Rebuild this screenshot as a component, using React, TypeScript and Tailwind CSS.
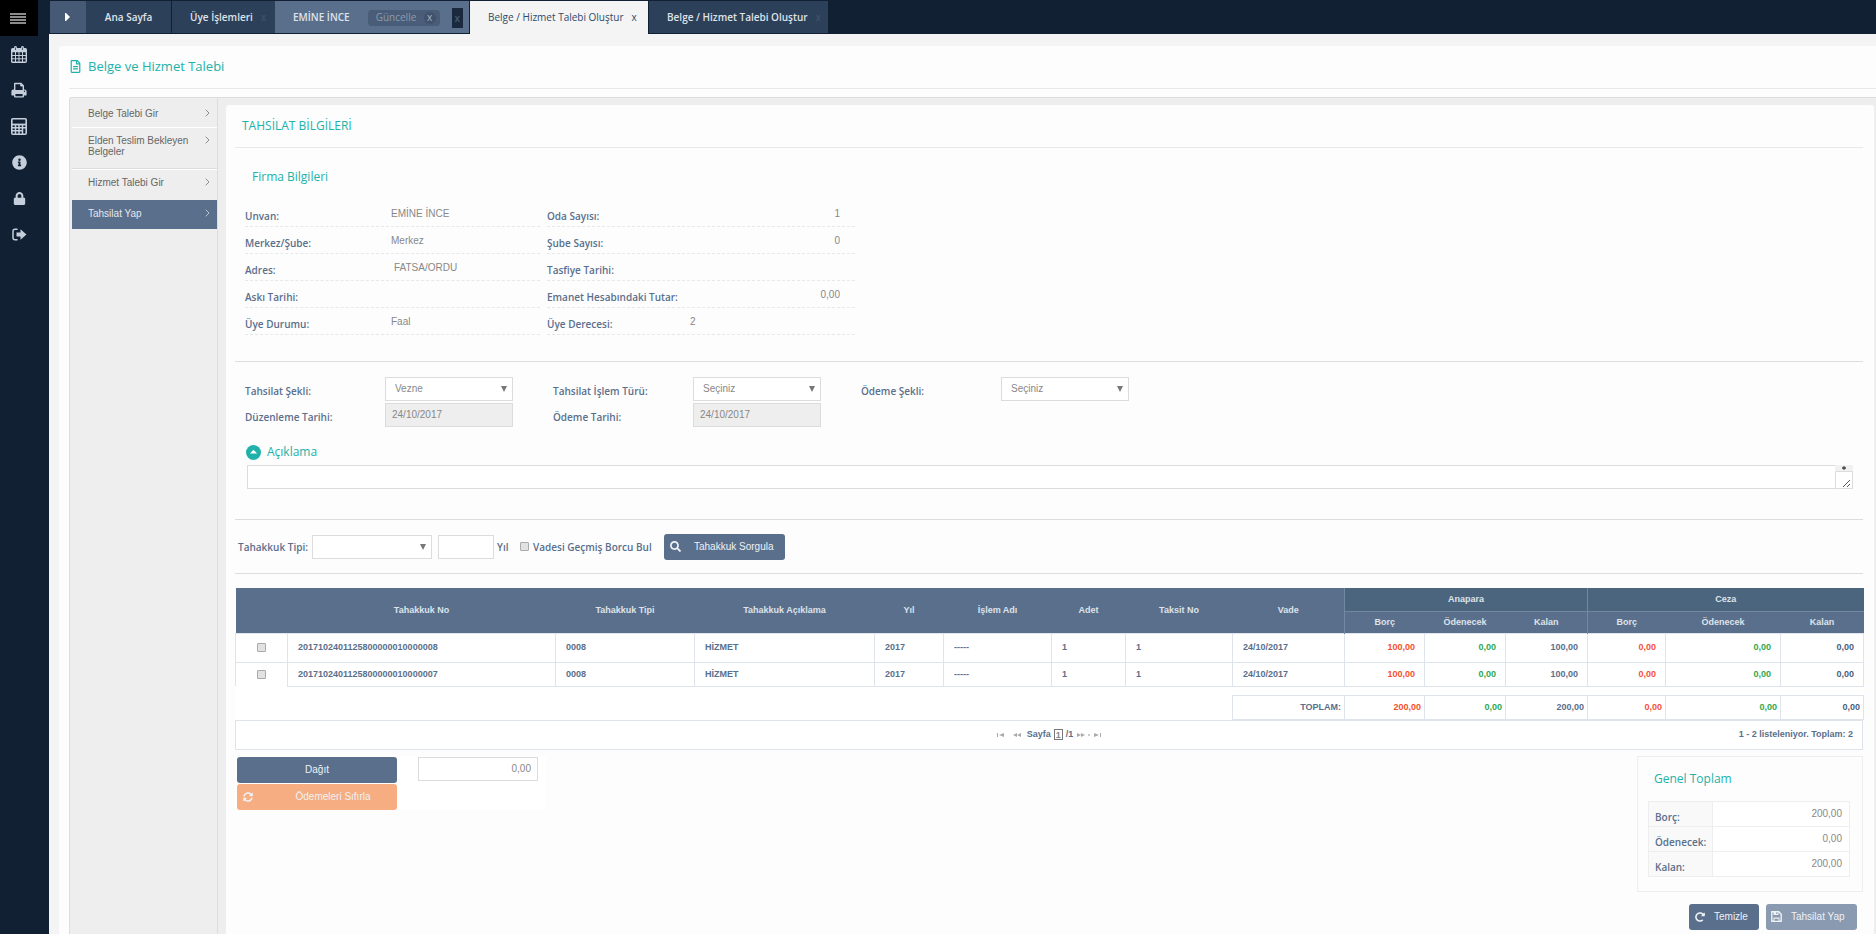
import { useState } from "react"
import type { ReactNode } from "react"
import { FaInfoCircle, FaLock, FaRedoAlt, FaRegFileAlt, FaSearch, FaSyncAlt } from "react-icons/fa"

const LABEL = "font-['Open_Sans',sans-serif] text-[10px] leading-4 font-semibold text-[#5a6f8c]"
const HEADING = "font-['Open_Sans',sans-serif] text-[12px] leading-4 text-[#20b2aa]"
const FIELD = "h-6 border border-[#dcdcdc] font-['Liberation_Sans',sans-serif] text-[10px] text-[#888]"

function CalendarIcon() {
  return (
    <svg width="16" height="17" viewBox="0 0 16 17" fill="none" stroke="currentColor">
      <rect x="0.700" y="2.700" width="14.600" height="13.600" rx="1" strokeWidth="1.400" />
      <path d="M1 4.500h14" strokeWidth="3.500" />
      <path d="M4.500 6v10M8 6v10M11.500 6v10M1 9.500h14M1 12.800h14" strokeWidth="1" />
      <path d="M4.500 1.500v2.500M11.500 1.500v2.500" strokeWidth="2.800" strokeLinecap="round" />
      <path d="M4.500 1.500v2.500M11.500 1.500v2.500" stroke="#122033" strokeWidth="0.700" />
    </svg>
  )
}

function PrintIcon() {
  return (
    <svg width="16" height="16" viewBox="0 0 16 16" fill="currentColor">
      <path
        fillRule="evenodd"
        d="M3 1.500Q3 .8 3.700.8h6.600L13 3.500v3.900h.7Q15.600 7.400 15.600 9.300v3.700q0 .4-.4.4H13v1.200q0 .8-.8.8H3.800q-.8 0-.8-.8v-1.200H.8q-.4 0-.4-.4V9.300Q.4 7.400 2.300 7.400H3zM4.400 2.200V8h7.200V4.600H10Q9.200 4.600 9.200 3.800V2.200zM4.400 11.900v2.300h7.200v-2.300zM13.500 8.600a.7.7 0 1 0 0 1.400a.7.7 0 1 0 0-1.400z"
      />
    </svg>
  )
}

function CalculatorIcon() {
  return (
    <svg width="16" height="17" viewBox="0 0 16 17" fill="none" stroke="currentColor">
      <rect x="0.800" y="0.800" width="14.400" height="15.400" rx="1" strokeWidth="1.600" />
      <path d="M1 6.500h14" strokeWidth="1.800" />
      <path d="M4.500 7v9M8 7v9M11.500 7v9M1 9.700h14M1 12.800h10.500" strokeWidth="1.500" />
    </svg>
  )
}

function SignOutIcon() {
  return (
    <svg width="15" height="13" viewBox="0 0 15 13">
      <path d="M5.500 1.200H3Q1 1.200 1 3.200v6.600q0 2 2 2h2.500" fill="none" stroke="currentColor" strokeWidth="1.500" />
      <path d="M4.500 4.500h4V1.200L14.500 6.500l-6 5.300V8.500h-4z" fill="currentColor" />
    </svg>
  )
}

function SaveIcon() {
  return (
    <svg width="11" height="11" viewBox="0 0 11 11" className="shrink-0">
      <path d="M.8.800h7L10.200 3.200v7H.8z" fill="none" stroke="currentColor" strokeWidth="1.400" />
      <path d="M2.500.5h5v3.500h-5zM2.500 6.500h6v4h-6z" fill="currentColor" />
      <path d="M5.300 1.200h1.200v1.800H5.300zM3.500 7.700h4v2h-4z" fill="#8a9ab0" />
    </svg>
  )
}

const SIDE_ITEMS: { name: string; icon: ReactNode }[] = [
  { name: "Takvim", icon: <CalendarIcon /> },
  { name: "Yazdır", icon: <PrintIcon /> },
  { name: "Hesap makinesi", icon: <CalculatorIcon /> },
  { name: "Bilgi", icon: <FaInfoCircle size={15} /> },
  { name: "Kilitle", icon: <FaLock size={13} /> },
  { name: "Çıkış", icon: <SignOutIcon /> },
]

function Sidebar() {
  return (
    <aside className="w-[49px] shrink-0 bg-[#122033]">
      <button aria-label="Menü" className="flex h-9 w-[38px] items-center justify-center bg-black pr-[2px]">
        <svg width="16" height="11" viewBox="0 0 16 11" className="text-[#8c8c8c]">
          <path d="M0 1h16M0 4h16M0 7h16M0 10h16" stroke="currentColor" strokeWidth="2" />
        </svg>
      </button>
      <nav className="flex w-[38px] flex-col text-[#c5cedb]">
        {SIDE_ITEMS.map((item) => (
          <button key={item.name} aria-label={item.name} className="flex h-9 items-center justify-center">
            {item.icon}
          </button>
        ))}
      </nav>
    </aside>
  )
}

function TabBar() {
  return (
    <header className="flex h-[34px] bg-[#122033] pt-px pl-px font-['Open_Sans',sans-serif] text-[10px] font-semibold text-[#dfe3e8]">
      <button aria-label="Sekmeleri kaydır" className="flex h-8 w-9 items-center justify-center bg-[#465a75] pr-[2px]">
        <svg width="5" height="8" viewBox="0 0 5 8" fill="#fff">
          <path d="M0 0h1l4 4-4 4H0z" />
        </svg>
      </button>
      <button className="mr-px h-8 w-[85px] bg-[#2d405a]">Ana Sayfa</button>
      <div className="flex h-8 w-[103px] items-center bg-[#2d405a] pl-[18px]">
        <button>Üye İşlemleri</button>
        <button aria-label="Kapat" className="ml-2 text-[#3d506b]">x</button>
      </div>
      <div className="mr-px flex h-8 w-[194px] items-center bg-[#5a6f8c] pt-px pl-[18px]">
        <button>EMİNE İNCE</button>
        <div className="ml-[18px] flex h-4 w-[72px] items-center justify-between rounded-sm bg-[#4a5d78] pr-1 pl-2 font-normal text-[#8c9bb0]">
          <span>Güncelle</span>
          <button aria-label="Güncelle kapat" className="flex size-3 items-center justify-center rounded-full bg-[#40526c] pb-px text-[#a9b4c3]">x</button>
        </div>
        <button aria-label="Kapat" className="ml-3 h-5 w-[11px] bg-[#1a293d] leading-4 text-[#465a75]">x</button>
      </div>
      <div className="mr-px flex h-[33px] w-[178px] items-center bg-[#f4f4f4] pb-px pl-[18px] font-medium text-[#2f4a6b]">
        <button>Belge / Hizmet Talebi Oluştur</button>
        <button aria-label="Kapat" className="ml-2">x</button>
      </div>
      <div className="flex h-8 w-[179px] items-center bg-[#2d405a] pl-[18px]">
        <button>Belge / Hizmet Talebi Oluştur</button>
        <button aria-label="Kapat" className="ml-2 text-[#3d506b]">x</button>
      </div>
    </header>
  )
}

function Chevron() {
  return (
    <svg width="5" height="8" viewBox="0 0 5 8" fill="none" stroke="currentColor" className="mt-px shrink-0 opacity-70">
      <path d="M.7.7L4 4 .7 7.300" />
    </svg>
  )
}

function SubMenu() {
  const item = "flex items-start justify-between border-t border-white pr-[7px] pl-4 text-left text-[10px] leading-[11px]"
  return (
    <nav className="flex w-[148px] shrink-0 flex-col border-r border-[#ddd] pt-px pl-[2px] font-['Liberation_Sans',sans-serif] text-[#666]">
      <a href="#belge" className="flex h-7 items-start justify-between pt-[9px] pr-[7px] pl-4 text-[10px] leading-[11px]">
        Belge Talebi Gir <Chevron />
      </a>
      <a href="#elden" className={`${item} h-[42px] border-b border-b-[#ddd] pt-[7px]`}>
        <span className="w-[110px]">Elden Teslim Bekleyen Belgeler</span> <Chevron />
      </a>
      <a href="#hizmet" className={`${item} h-[31px] pt-[7px]`}>
        Hizmet Talebi Gir <Chevron />
      </a>
      <a href="#tahsilat" className="flex h-[29px] items-start justify-between bg-[#5a6f8c] pt-2 pr-[7px] pl-4 text-[10px] leading-[11px] text-[#e4e8ee]">
        Tahsilat Yap <Chevron />
      </a>
    </nav>
  )
}

const COMPANY_LEFT = [
  ["Unvan:", "EMİNE İNCE"],
  ["Merkez/Şube:", "Merkez"],
  ["Adres:", "FATSA/ORDU"],
  ["Askı Tarihi:", ""],
  ["Üye Durumu:", "Faal"],
]

const COMPANY_RIGHT = [
  ["Oda Sayısı:", "1"],
  ["Şube Sayısı:", "0"],
  ["Tasfiye Tarihi:", ""],
  ["Emanet Hesabındaki Tutar:", "0,00"],
  ["Üye Derecesi:", "2"],
]

function CompanyInfo() {
  const row = "flex h-[27px] justify-between border-b border-dashed border-[#e8e8e8]"
  const value = "pt-[7px] text-[10px] leading-[14px] text-[#888]"
  return (
    <div className="flex gap-[7px] pl-[10px]">
      <dl className="w-[295px]">
        {COMPANY_LEFT.map(([label, text]) => (
          <div key={label} className={row}>
            <dt className={`${LABEL} w-[146px] pt-2`}>{label}</dt>
            <dd className={`${value} flex-1 ${text === "FATSA/ORDU" ? "pl-[3px]" : ""}`}>{text}</dd>
          </div>
        ))}
      </dl>
      <dl className="w-[308px]">
        {COMPANY_RIGHT.map(([label, text]) => (
          <div key={label} className={row}>
            <dt className={`${LABEL} w-[143px] pt-2 whitespace-nowrap`}>{label}</dt>
            <dd className={`${value} flex-1 pr-[15px] ${text === "2" ? "text-left" : "text-right"}`}>{text}</dd>
          </div>
        ))}
      </dl>
    </div>
  )
}

function Select({ id, options, className }: { id: string; options: string[]; className: string }) {
  return (
    <div className={`relative ${className}`}>
      <select id={id} className={`${FIELD} block w-full appearance-none bg-white pb-px pl-[9px]`}>
        {options.map((o) => (
          <option key={o}>{o}</option>
        ))}
      </select>
      <svg width="6" height="6" viewBox="0 0 6 6" className="pointer-events-none absolute top-[9px] right-[6px]" fill="#777">
        <path d="M0 0h6L3 6z" />
      </svg>
    </div>
  )
}

function PaymentForm() {
  const label = `${LABEL} w-[140px] pt-[6px]`
  return (
    <div className="grid grid-cols-[268px_268px_268px] gap-x-10 gap-y-[2px] pt-[15px] pl-[10px]">
      <div className="flex">
        <label htmlFor="sekil" className={label}>Tahsilat Şekli:</label>
        <Select id="sekil" options={["Vezne"]} className="w-32" />
      </div>
      <div className="flex">
        <label htmlFor="islem" className={label}>Tahsilat İşlem Türü:</label>
        <Select id="islem" options={["Seçiniz"]} className="w-32" />
      </div>
      <div className="flex">
        <label htmlFor="odeme" className={label}>Ödeme Şekli:</label>
        <Select id="odeme" options={["Seçiniz"]} className="w-32" />
      </div>
      <div className="flex">
        <label htmlFor="duzenleme" className={label}>Düzenleme Tarihi:</label>
        <input id="duzenleme" readOnly value="24/10/2017" className={`${FIELD} w-32 bg-[#eee] pb-px pl-[6px]`} />
      </div>
      <div className="flex">
        <label htmlFor="odemetarihi" className={label}>Ödeme Tarihi:</label>
        <input id="odemetarihi" readOnly value="24/10/2017" className={`${FIELD} w-32 bg-[#eee] pb-px pl-[6px]`} />
      </div>
    </div>
  )
}

function Description() {
  return (
    <div className="pt-4 pr-[10px] pl-3">
      <label htmlFor="aciklama" className={`${HEADING} -ml-px flex h-[18px] items-center gap-[6px]`}>
        <svg width="15" height="15" viewBox="0 0 15 15">
          <circle cx="7.500" cy="7.500" r="7.500" fill="#20b2aa" />
          <path d="M4 8.500L7.500 4.800 11 8.500z" fill="#fff" />
        </svg>
        Açıklama
      </label>
      <div className="relative mt-1">
        <textarea id="aciklama" className="block h-6 w-full resize-none border border-[#dcdcdc] bg-white" />
        <svg width="18" height="24" viewBox="0 0 18 24" className="pointer-events-none absolute top-0 right-0">
          <path d="M0 0h18v6H0z" fill="#f1f1f1" />
          <path d="M9 1l2 1.500v1L9 5 7 3.500v-1z" fill="#555" />
          <path d="M.5 23.500v-17h17v17z" fill="#fff" stroke="#dcdcdc" />
          <path d="M8 22l7-7M12 22l3-3" stroke="#555" />
        </svg>
      </div>
    </div>
  )
}

function SearchBar() {
  const [year, setYear] = useState("")
  return (
    <div className="flex h-[55px] items-center border-y border-[#ddd] pl-[3px]">
      <label htmlFor="tip" className={`${LABEL} w-[74px] shrink-0 whitespace-nowrap`}>Tahakkuk Tipi:</label>
      <Select id="tip" options={[""]} className="w-[120px]" />
      <input id="yil" value={year} onChange={(e) => setYear(e.target.value)} className={`${FIELD} mr-[3px] ml-[6px] w-14 bg-white px-1`} />
      <label htmlFor="yil" className={`${LABEL} w-3`}>Yıl</label>
      <Tick id="vade" className="ml-[11px]" />
      <label htmlFor="vade" className={`${LABEL} ml-1 min-w-[120px]`}>Vadesi Geçmiş Borcu Bul</label>
      <button className="ml-[11px] flex h-[26px] w-[121px] items-center gap-[13px] rounded-[3px] bg-[#5a6f8c] pl-[6px] font-['Liberation_Sans',sans-serif] text-[10px] whitespace-nowrap text-[#eef1f5]">
        <FaSearch size={11} />
        Tahakkuk Sorgula
      </button>
    </div>
  )
}

function Tick({ id, label, className = "" }: { id: string; label?: string; className?: string }) {
  return (
    <input
      id={id}
      type="checkbox"
      aria-label={label}
      className={`size-[9px] appearance-none rounded-[1px] border border-[#aaa] bg-[#e2e2e2] checked:bg-[#5a6f8c] ${className}`}
    />
  )
}

const WIDTHS = [52, 268, 139, 180, 69, 108, 74, 107, 112, 80, 81, 82, 78, 115, 83]
const HEADERS = ["", "Tahakkuk No", "Tahakkuk Tipi", "Tahakkuk Açıklama", "Yıl", "İşlem Adı", "Adet", "Taksit No", "Vade"]
const ROWS = [
  { no: "2017102401125800000010000008", height: "h-[29px]" },
  { no: "2017102401125800000010000007", height: "h-6" },
]
const AMOUNT_COLORS = ["text-[#f4512c]", "text-[#2fa84f]", "text-[#5a6f8c]", "text-[#f4513c]", "text-[#2fa84f]", "text-[#4a5f7c]"]

function AccrualTable() {
  const cell = "border border-[#dfe3ec]"
  return (
    <table className="mt-[14px] w-full table-fixed border-collapse bg-white font-['Liberation_Sans',sans-serif] text-[9px] leading-3 font-bold text-[#5a6f8c]">
      <colgroup>
        {WIDTHS.map((w, i) => (
          <col key={i} style={{ width: w }} />
        ))}
      </colgroup>
      <thead className="bg-[#5a6f8c] text-[#dde3ea]">
        <tr className="h-[23px]">
          {HEADERS.map((h, i) => (
            <th key={i} rowSpan={2}>{h}</th>
          ))}
          <th colSpan={3} className="border-b border-l border-[#7389a3] bg-[#4c657e]">Anapara</th>
          <th colSpan={3} className="border-b border-l border-[#7389a3] bg-[#4c657e]">Ceza</th>
        </tr>
        <tr className="h-[22px]">
          <th className="border-l border-[#7389a3]">Borç</th>
          <th>Ödenecek</th>
          <th>Kalan</th>
          <th className="border-l border-[#7389a3]">Borç</th>
          <th>Ödenecek</th>
          <th>Kalan</th>
        </tr>
      </thead>
      <tbody>
        {ROWS.map((row) => (
          <tr key={row.no} className={row.height}>
            <td className={`${cell} pb-px text-center ${row.height === "h-6" ? "border-b-0" : ""}`}>
              <Tick id={row.no} label={row.no} className="align-middle" />
            </td>
            {[row.no, "0008", "HİZMET", "2017", "-----", "1", "1", "24/10/2017"].map((text, i) => (
              <td key={i} className={`${cell} pb-px pl-[10px]`}>{text}</td>
            ))}
            {["100,00", "0,00", "100,00", "0,00", "0,00", "0,00"].map((text, i) => (
              <td key={i} className={`${cell} pr-[9px] pb-px text-right ${AMOUNT_COLORS[i]}`}>{text}</td>
            ))}
          </tr>
        ))}
        <tr className="h-[9px]">
          <td colSpan={15} className="p-0" />
        </tr>
        <tr className="h-6">
          <td colSpan={8} />
          <td className={`${cell} pr-[3px] text-right`}>TOPLAM:</td>
          {["200,00", "0,00", "200,00", "0,00", "0,00", "0,00"].map((text, i) => (
            <td key={i} className={`${cell} pr-[3px] text-right ${AMOUNT_COLORS[i]}`}>{text}</td>
          ))}
        </tr>
      </tbody>
    </table>
  )
}

function PageArrow({ label, bar, flip }: { label: string; bar?: boolean; flip?: boolean }) {
  return (
    <button aria-label={label} className={flip ? "rotate-180" : ""}>
      <svg width="8" height="4" viewBox="0 0 8 4" fill="#aaa">
        {bar ? <path d="M0 0h1v4H0zM7 0v4L2 2z" /> : <path d="M4 0v4L0 2zM8 0v4L4 2z" />}
      </svg>
    </button>
  )
}

function Pager() {
  return (
    <div className="grid h-[30px] grid-cols-[1fr_auto_1fr] items-center border border-[#dfe3ec] bg-white pr-[9px] font-['Liberation_Sans',sans-serif] text-[9px] font-bold text-[#5a6f8c]">
      <span />
      <div className="flex items-center pl-[9px]">
        <div className="mr-[6px] flex gap-2">
          <PageArrow label="İlk" bar />
          <PageArrow label="Önceki" />
        </div>
        Sayfa
        <input aria-label="Sayfa" defaultValue="1" className="mx-[3px] h-[11px] w-[9px] border border-[#777] text-center text-[9px] leading-[9px] text-[#888]" />
        /1
        <div className="ml-1 flex items-center gap-[3px]">
          <PageArrow label="Sonraki" flip />
          <span className="size-[2px] bg-[#ccc]" />
          <PageArrow label="Son" bar flip />
        </div>
      </div>
      <span className="justify-self-end">1 - 2 listeleniyor. Toplam: 2</span>
    </div>
  )
}

function Distribution() {
  return (
    <div className="flex h-fit w-[311px] gap-[21px] bg-white pt-px pl-[2px]">
      <div className="flex w-40 flex-col gap-px font-['Liberation_Sans',sans-serif] text-[10px] text-[#eef1f5]">
        <button className="h-[26px] rounded-[3px] bg-[#5a6f8c]">Dağıt</button>
        <button className="flex h-[26px] items-center rounded-[3px] bg-[#f6ad82] pl-[6px]">
          <FaSyncAlt size={10} />
          <span className="flex-1 pl-4">Ödemeleri Sıfırla</span>
        </button>
      </div>
      <input aria-label="Dağıtılacak tutar" defaultValue="0,00" className={`${FIELD} w-[120px] bg-white pr-[6px] text-right`} />
    </div>
  )
}

function Totals() {
  return (
    <section className="h-[136px] w-[226px] border border-[#eee] px-[10px] pt-[14px]">
      <h3 className={`${HEADING} pl-[6px]`}>Genel Toplam</h3>
      <table className="mt-[14px] w-[202px] border-collapse">
        <tbody>
          {[["Borç:", "200,00"], ["Ödenecek:", "0,00"], ["Kalan:", "200,00"]].map(([label, value]) => (
            <tr key={label} className="h-[25px]">
              <th className={`${LABEL} w-[64px] border border-[#eee] bg-[#f9f9f9] pt-[7px] pl-[6px] text-left`}>{label}</th>
              <td className="border border-[#eee] bg-white pt-px pr-[7px] text-right font-['Liberation_Sans',sans-serif] text-[10px] leading-[14px] text-[#888]">
                {value}
              </td>
            </tr>
          ))}
        </tbody>
      </table>
    </section>
  )
}

export default function App() {
  return (
    <div className="flex min-h-screen bg-[#f4f4f4] font-['Liberation_Sans',sans-serif]">
      <Sidebar />
      <div className="flex min-w-0 flex-1 flex-col">
        <TabBar />
        <div className="mt-3 ml-[10px] flex flex-1 flex-col rounded-tl-[3px] bg-[#fdfdfd] pl-[10px]">
          <h1 className="flex h-[43px] items-center gap-[6px] border-b border-[#e8e8e8] pb-px font-['Open_Sans',sans-serif] text-[13px] text-[#20b2aa]">
            <FaRegFileAlt size={13} />
            Belge ve Hizmet Talebi
          </h1>
          <div className="mt-2 flex flex-1 rounded-tl-[3px] border-t border-l border-[#ddd] bg-[#eee]">
            <SubMenu />
            <main className="mt-[7px] mr-[2px] ml-2 min-w-0 flex-1 rounded-t-[3px] bg-[#fdfdfd] pr-[11px] pl-[9px]">
              <h2 className={`${HEADING} h-[43px] border-b border-[#e8e8e8] pt-[13px] pl-[7px]`}>TAHSİLAT BİLGİLERİ</h2>
              <h3 className={`${HEADING} h-[52px] pt-[21px] pl-[17px]`}>Firma Bilgileri</h3>
              <CompanyInfo />
              <hr className="mt-[26px] border-[#ddd]" />
              <PaymentForm />
              <Description />
              <div className="h-[30px]" />
              <SearchBar />
              <AccrualTable />
              <Pager />
              <div className="flex items-start justify-between pt-[6px]">
                <Distribution />
                <Totals />
              </div>
              <div className="flex justify-end gap-[7px] pt-3 pr-[6px] pb-1 text-[10px] text-[#eef1f5]">
                <button className="flex h-[26px] w-[70px] items-center gap-[9px] rounded-[3px] bg-[#5a6f8c] pl-[6px]">
                  <FaRedoAlt size={10} />
                  Temizle
                </button>
                <button disabled className="flex h-[26px] w-[91px] items-center gap-[9px] rounded-[3px] bg-[#8a9ab0] pl-[5px]">
                  <SaveIcon />
                  Tahsilat Yap
                </button>
              </div>
            </main>
          </div>
        </div>
      </div>
    </div>
  )
}
